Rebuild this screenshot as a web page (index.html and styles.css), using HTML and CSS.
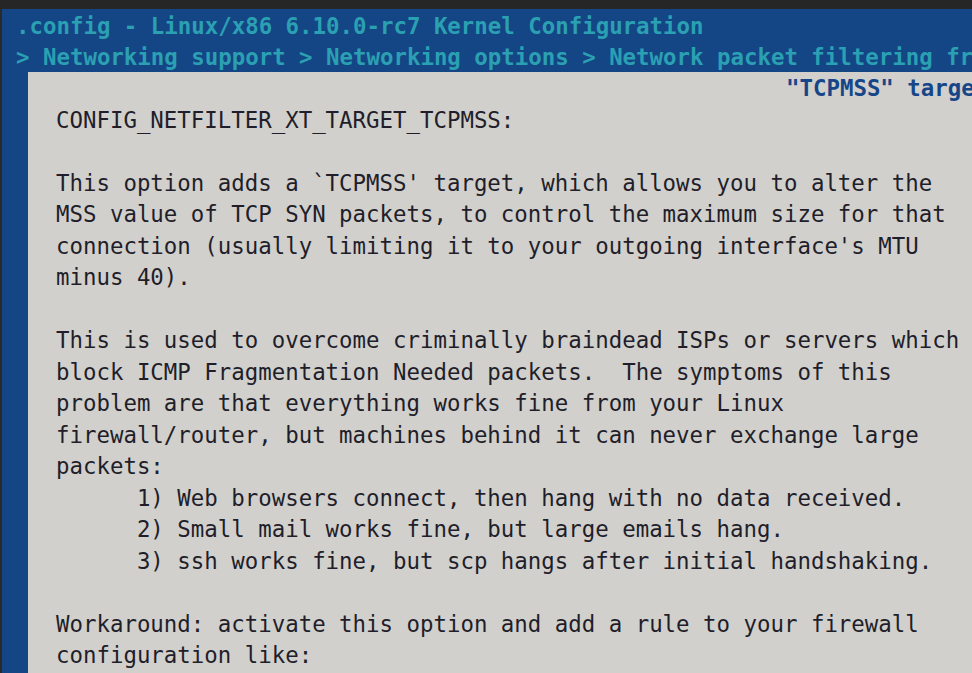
FILE: index.html
```
<!DOCTYPE html>
<html>
<head>
<meta charset="utf-8">
<link rel="stylesheet" href="styles.css">
</head>
<body>
<div class="topbar"></div>
<div class="screen">
<div class="head">.config - Linux/x86 6.10.0-rc7 Kernel Configuration</div>
<div class="head">&gt; Networking support &gt; Networking options &gt; Network packet filtering framework (Netfilter) &gt; Core Netfilter Configuration</div>
<div class="panel">
<div class="title">"TCPMSS" target support</div>
<pre class="help">CONFIG_NETFILTER_XT_TARGET_TCPMSS:

This option adds a `TCPMSS' target, which allows you to alter the
MSS value of TCP SYN packets, to control the maximum size for that
connection (usually limiting it to your outgoing interface's MTU
minus 40).

This is used to overcome criminally braindead ISPs or servers which
block ICMP Fragmentation Needed packets.  The symptoms of this
problem are that everything works fine from your Linux
firewall/router, but machines behind it can never exchange large
packets:
      1) Web browsers connect, then hang with no data received.
      2) Small mail works fine, but large emails hang.
      3) ssh works fine, but scp hangs after initial handshaking.

Workaround: activate this option and add a rule to your firewall
configuration like:</pre>
</div>
</div>
</body>
</html>
```
FILE: styles.css
```
html, body {
  margin: 0;
  padding: 0;
  width: 972px;
  height: 673px;
  overflow: hidden;
  background: #2a2a2a;
}
body {
  font-family: "DejaVu Sans Mono", monospace;
  font-size: 22.4px;
  line-height: 31.5px;
}
.topbar {
  height: 9px;
  background: #262626;
}
.screen {
  margin-left: 2px;
  height: 664px;
  background: #144686;
  overflow: hidden;
}
.head {
  box-sizing: border-box;
  height: 31.5px;
  padding-top: 1.5px;
  padding-left: 14px;
  color: #2ba0b2;
  font-weight: bold;
  white-space: pre;
}
.panel {
  margin-left: 26px;
  width: 2000px;
  height: 700px;
  background: #d1d0cc;
}
.title {
  box-sizing: border-box;
  height: 31.5px;
  padding-top: 1px;
  padding-left: 758px;
  color: #164688;
  font-weight: bold;
  white-space: pre;
}
.help {
  margin: 0;
  padding-top: 1px;
  padding-left: 28px;
  font-family: inherit;
  font-size: inherit;
  line-height: inherit;
  color: #1f1e2a;
}
```
